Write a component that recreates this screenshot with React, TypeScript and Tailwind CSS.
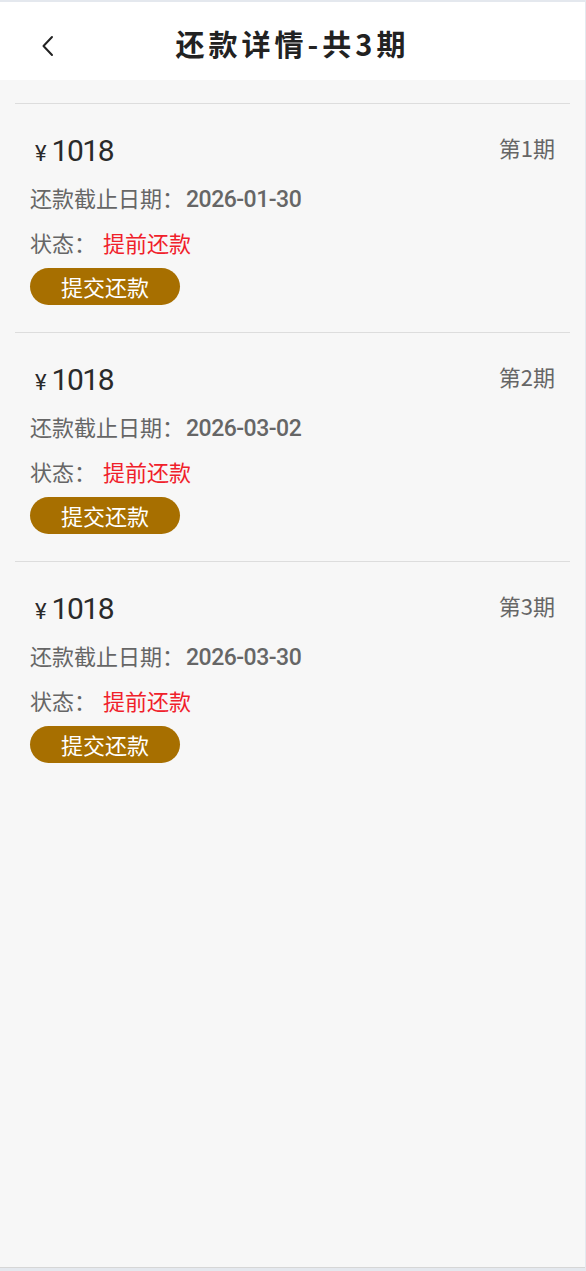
import React from "react";

const cjk = { fontFamily: '"Noto Sans CJK SC", "Noto Sans", sans-serif' };
const num = { fontFamily: 'Roboto, "Noto Sans CJK SC", sans-serif' };

const items = [
  { period: 1, date: "2026-01-30" },
  { period: 2, date: "2026-03-02" },
  { period: 3, date: "2026-03-30" },
];

export default function App() {
  return (
    <div className="w-[586px] h-[1271px] bg-[#e4e8ee] pt-[2px]" style={cjk}>
      <div className="w-[585px] h-[1266px] bg-[#f7f7f7] border-b border-[#d6d6d6] flex flex-col">
        <div className="h-[78px] bg-white relative flex items-center justify-center">
          <svg className="absolute left-[40px] top-[33px]" width="16" height="22" viewBox="0 0 16 22" fill="none">
            <path d="M12 2 L3.5 11 L12 20" stroke="#222" strokeWidth="2" strokeLinecap="round" strokeLinejoin="round" />
          </svg>
          <div className="text-[29px] font-bold text-[#222] tracking-[4px] leading-none mt-[4px]">还款详情-共3期</div>
        </div>
        <div className="pt-[23px] px-[15px]">
          {items.map((it) => (
            <div key={it.period} className="border-t border-[#dddddd] px-[15px] pt-[26px] pb-[27px]">
              <div className="h-[40px] flex items-center justify-between">
                <div className="flex items-baseline text-[#2a2a2a] pl-[5px]">
                  <span className="text-[22px] mr-[5px]" style={num}>¥</span>
                  <span className="text-[30px] tracking-[-1.5px]" style={num}>1018</span>
                </div>
                <div className="text-[22px] text-[#666] mb-[5px]">第{it.period}期</div>
              </div>
              <div className="h-[30px] mt-[12px] flex items-baseline text-[22px] text-[#666] leading-[30px]">
                <span>还款截止日期：</span>
                <span className="text-[23px] font-medium tracking-[-0.5px] ml-[2px]" style={num}>{it.date}</span>
              </div>
              <div className="h-[30px] mt-[15px] flex items-center text-[22px]">
                <span className="text-[#666]">状态：</span>
                <span className="text-[#f0202a] ml-[7px]">提前还款</span>
              </div>
              <div className="mt-[11px] w-[150px] h-[37px] rounded-full bg-[#a76f00] text-white text-[22px] flex items-center justify-center">
                提交还款
              </div>
            </div>
          ))}
        </div>
      </div>
    </div>
  );
}
